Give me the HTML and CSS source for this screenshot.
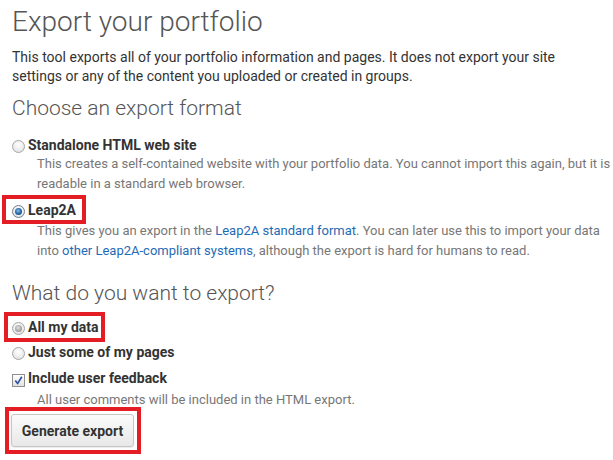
FILE: index.html
```html
<!DOCTYPE html>
<html lang="en">
<head>
<meta charset="utf-8">
<title>Export your portfolio</title>
<link rel="stylesheet" href="styles.css">
</head>
<body>
<div class="page">
  <h1 class="title">Export your portfolio</h1>
  <p class="intro">This tool exports all of your portfolio information and pages. It does not export your site settings or any of the content you uploaded or created in groups.</p>

  <h2 class="section">Choose an export format</h2>
  <label class="choice first"><span class="radio"></span><span class="label">Standalone HTML web site</span></label>
  <div class="desc">This creates a self-contained website with your portfolio data. You cannot import this again, but it is readable in a standard web browser.</div>
  <div class="mark mark-leap"><label class="choice"><span class="radio on"></span><span class="label">Leap2A</span></label></div>
  <div class="desc desc-leap">This gives you an export in the <a href="#">Leap2A standard format</a>. You can later use this to import your data into <a href="#">other Leap2A-compliant systems</a>, although the export is hard for humans to read.</div>

  <h2 class="section second">What do you want to export?</h2>
  <div class="mark mark-all"><label class="choice"><span class="radio grey"></span><span class="label">All my data</span></label></div>
  <label class="choice pages"><span class="radio"></span><span class="label">Just some of my pages</span></label>
  <label class="choice feedback"><span class="check"><svg viewBox="0 0 11 11" width="11" height="11"><path d="M2.3 5.6 L4.6 8.6 L8.8 1.8" fill="none" stroke="#2e55a4" stroke-width="1.7" stroke-linejoin="round"/></svg></span><span class="label">Include user feedback</span></label>
  <div class="desc desc-feedback">All user comments will be included in the HTML export.</div>
  <div class="mark mark-btn"><button class="btn" type="button">Generate export</button></div>
</div>
</body>
</html>
```
FILE: styles.css
```css
html, body {
  margin: 0;
  padding: 0;
  background: #fff;
}
body {
  font-family: Roboto, "Liberation Sans", sans-serif;
  font-size: 14px;
  color: #333;
}
.page {
  padding: 0 7px 0 12px;
}
.title {
  margin: 0;
  padding-top: 2px;
  font-size: 28px;
  font-weight: 300;
  color: #555;
  line-height: 40px;
}
.intro {
  margin: 6px 0 0;
  line-height: 19px;
  color: #333;
}
.section {
  margin: 7px 0 0;
  font-size: 21px;
  font-weight: 300;
  color: #555;
  line-height: 30px;
}
.section.second {
  margin-top: 17px;
}
.choice {
  display: flex;
  align-items: center;
  gap: 3px;
  height: 18px;
  color: #333;
}
.choice.first {
  margin-top: 13px;
}
.label {
  font-weight: 700;
  line-height: 18px;
}
.radio {
  box-sizing: border-box;
  width: 13px;
  height: 13px;
  border-radius: 50%;
  border: 1px solid #a6a6a6;
  background: radial-gradient(circle at 50% 35%, #ffffff 0%, #ededed 55%, #d9d9d9 100%);
  margin-top: 3px;
  position: relative;
  flex: none;
}
.radio.on::after,
.radio.grey::after {
  content: "";
  position: absolute;
  left: 2px;
  top: 2px;
  width: 7px;
  height: 7px;
  border-radius: 50%;
}
.radio.on {
  border-color: #6d7e92;
}
.radio.on::after {
  background: radial-gradient(circle at 45% 40%, #8cc4ee 0%, #2f6fae 45%, #153a66 100%);
}
.radio.grey::after {
  background: radial-gradient(circle at 45% 40%, #e2e2e2 0%, #a3a3a3 60%, #8a8a8a 100%);
}
.check {
  box-sizing: border-box;
  width: 13px;
  height: 13px;
  border: 1px solid #8f8f8f;
  background: linear-gradient(#ffffff, #e2e2e2);
  margin-top: 4px;
  flex: none;
  display: flex;
}
.desc {
  padding-left: 25px;
  margin-right: -7px;
  font-size: 13px;
  color: #777;
  line-height: 20px;
}
a {
  color: #1f6bb5;
  text-decoration: none;
}
.mark {
  display: block;
  width: fit-content;
  border: 4px solid #e41c23;
}
.mark .choice {
  height: 21px;
}
.mark-leap {
  margin: 1px 0 0 -10px;
  padding: 0 6px;
}
.desc-leap {
  margin-top: -3px;
}
.mark-all {
  margin: 4px 0 0 -8px;
  padding: 0 2px 0 4px;
}
.mark-all .choice {
  height: 22px;
}
.pages {
  margin-top: 1px;
}
.feedback {
  margin-top: 8px;
}
.desc-feedback {
  margin-top: 3px;
}
.mark-btn {
  margin: -3px 0 0 -7px;
  padding: 3px 3px 3px 2px;
}
.btn {
  display: block;
  font-family: Roboto, "Liberation Sans", sans-serif;
  font-size: 14px;
  font-weight: 700;
  color: #333;
  height: 33px;
  width: 123px;
  padding: 0;
  border: 1px solid #c6c6c6;
  border-radius: 3px;
  background: linear-gradient(#fbfbfb, #e8e8e8);
  box-shadow: 0 1px 1px rgba(0, 0, 0, 0.08);
}
```
